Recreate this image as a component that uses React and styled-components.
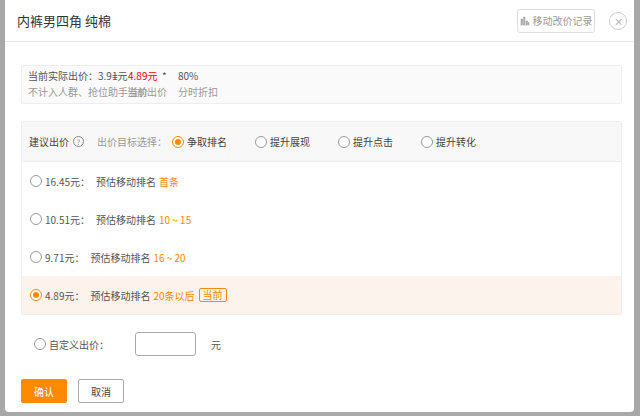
import React,{useState} from "react";
import styled,{createGlobalStyle} from "styled-components";

const Global = createGlobalStyle`
    html,body{margin:0;padding:0;background:#9a9a9a;font-family:"Noto Sans CJK SC","Noto Sans",sans-serif;}
`;
const ORANGE = "#ff8a00";
const Page = styled.div`
    width:640px;height:416px;padding:0 6px 4px 5px;box-sizing:border-box;background:#a8a8a8;
`;
const Modal = styled.div`
    width:100%;height:100%;background:#fff;border-radius:0 0 4px 4px;box-sizing:border-box;white-space:nowrap;
`;
const Header = styled.div`
    height:42px;border-bottom:1px solid #e8e8e8;display:flex;align-items:center;padding:0 7px 0 12px;box-sizing:border-box;
    & .title{font-size:13px;color:#333;flex:1;}
`;
const LogBtn = styled.div`
    height:24px;width:78px;border:1px solid #ddd;border-radius:3px;display:flex;align-items:center;justify-content:center;gap:3px;font-size:10px;color:#999;box-sizing:border-box;
`;
const Close = styled.div`
    width:18px;height:18px;border:1px solid #ccc;border-radius:50%;margin-left:14px;display:flex;align-items:center;justify-content:center;color:#bbb;font-size:11px;box-sizing:border-box;
`;
const Body = styled.div`padding:23px 12px 0 16px;`;
const Info = styled.div`
    border:1px solid #eee;background:#fafafa;border-radius:2px;padding:2px 6px 3px;font-size:10px;line-height:16px;color:#555;
    & .sub{color:#999;}
    & .red{color:#f00;}
`;
const InfoLine = styled.div`display:flex;`;
const Cell = styled.span`width:${p=>p.$w?p.$w+"px":"auto"};flex:none;`;
const Panel = styled.div`
    margin-top:17px;border:1px solid #eee;border-radius:2px;overflow:hidden;
`;
const PanelHead = styled.div`
    height:39px;background:#f8f8f8;border-bottom:1px solid #eee;display:flex;align-items:center;padding:0 7px;font-size:10px;color:#444;
    & .q{display:inline-flex;width:9px;height:9px;border:1px solid #888;border-radius:50%;font-size:7px;align-items:center;justify-content:center;margin:0 13px 0 4px;color:#888;}
    & .lab{color:#999;margin-right:5px;}
`;
const Opt = styled.label`display:flex;align-items:center;gap:3px;margin-right:${p=>p.$mr||0}px;`;
const Radio = styled.span`
    width:12px;height:12px;border-radius:50%;box-sizing:border-box;border:1px solid ${p=>p.$on?ORANGE:"#999"};background:#fff;display:inline-flex;align-items:center;justify-content:center;flex:none;
    &::after{content:"";width:6px;height:6px;border-radius:50%;background:${p=>p.$on?ORANGE:"transparent"};}
`;
const Row = styled.div`
    height:38px;display:flex;align-items:center;padding:0 8px;gap:3px;font-size:10px;color:#555;background:${p=>p.$on?"#fcf3ec":"#fff"};
    & .o{color:${ORANGE};}
    & .tag{border:1px solid ${ORANGE};color:${ORANGE};border-radius:2px;padding:0 3px;line-height:12px;margin-left:1px;}
`;
const Custom = styled.div`
    display:flex;align-items:center;height:24px;margin-top:17px;padding-left:13px;font-size:10px;color:#555;gap:3px;
    & input{width:61px;height:24px;border:1px solid #aaa;border-radius:3px;box-sizing:border-box;margin:0 12px 0 23px;}
`;
const Btns = styled.div`display:flex;gap:11px;margin-top:23px;`;
const Btn = styled.button`
    width:46px;height:24px;border-radius:2px;font-size:10px;font-family:inherit;cursor:pointer;padding:0;
    border:1px solid ${p=>p.$primary?ORANGE:"#aaa"};background:${p=>p.$primary?ORANGE:"#fff"};color:${p=>p.$primary?"#fff":"#444"};
`;
const goals = ["争取排名","提升展现","提升点击","提升转化"];
const rows = [
    {p:"16.45元：",r:"首条"},
    {p:"10.51元：",r:"10 ~ 15"},
    {p:"9.71元：",r:"16 ~ 20"},
    {p:"4.89元：",r:"20条以后",cur:true},
];
const App = () => {
    const [goal,setGoal] = useState(0);
    return (
        <Page>
            <Global/>
            <Modal>
                <Header>
                    <div className="title">内裤男四角 纯棉</div>
                    <LogBtn>
                        <svg width="10" height="10" viewBox="0 0 10 10"><path d="M0 10h10M1 9V3h1.5v6M3.5 9V1H5v8M6 9V5h1.5v4M8 9V6.5h1v2.5" stroke="#aaa" fill="#aaa" strokeWidth="0.6"/></svg>
                        移动改价记录
                    </LogBtn>
                    <Close>✕</Close>
                </Header>
                <Body>
                    <Info>
                        <InfoLine>
                            <Cell $w={84}>当前实际出价：3.91元</Cell><Cell $w={16}>=</Cell><Cell $w={34} className="red">4.89元</Cell><Cell $w={16}>*</Cell><Cell>80%</Cell>
                        </InfoLine>
                        <InfoLine className="sub">
                            <Cell $w={99}>不计入人群、抢位助手溢价</Cell><Cell $w={51}>当前出价</Cell><Cell>分时折扣</Cell>
                        </InfoLine>
                    </Info>
                    <Panel>
                        <PanelHead>
                            建议出价<span className="q">?</span><span className="lab">出价目标选择：</span>
                            {goals.map((g,i)=>(
                                <Opt key={g} $mr={i<3?28:0} onClick={()=>setGoal(i)}><Radio $on={goal===i}/>{g}</Opt>
                            ))}
                        </PanelHead>
                        {rows.map(r=>(
                            <Row key={r.p} $on={r.cur}>
                                <Radio $on={r.cur}/>{r.p}<span style={{marginLeft:3}}>预估移动排名</span><span className="o">{r.r}</span>{r.cur && <span className="tag">当前</span>}
                            </Row>
                        ))}
                    </Panel>
                    <Custom>
                        <Radio/>自定义出价：<input/>元
                    </Custom>
                    <Btns>
                        <Btn $primary>确认</Btn>
                        <Btn>取消</Btn>
                    </Btns>
                </Body>
            </Modal>
        </Page>
    );
}
export default App;
